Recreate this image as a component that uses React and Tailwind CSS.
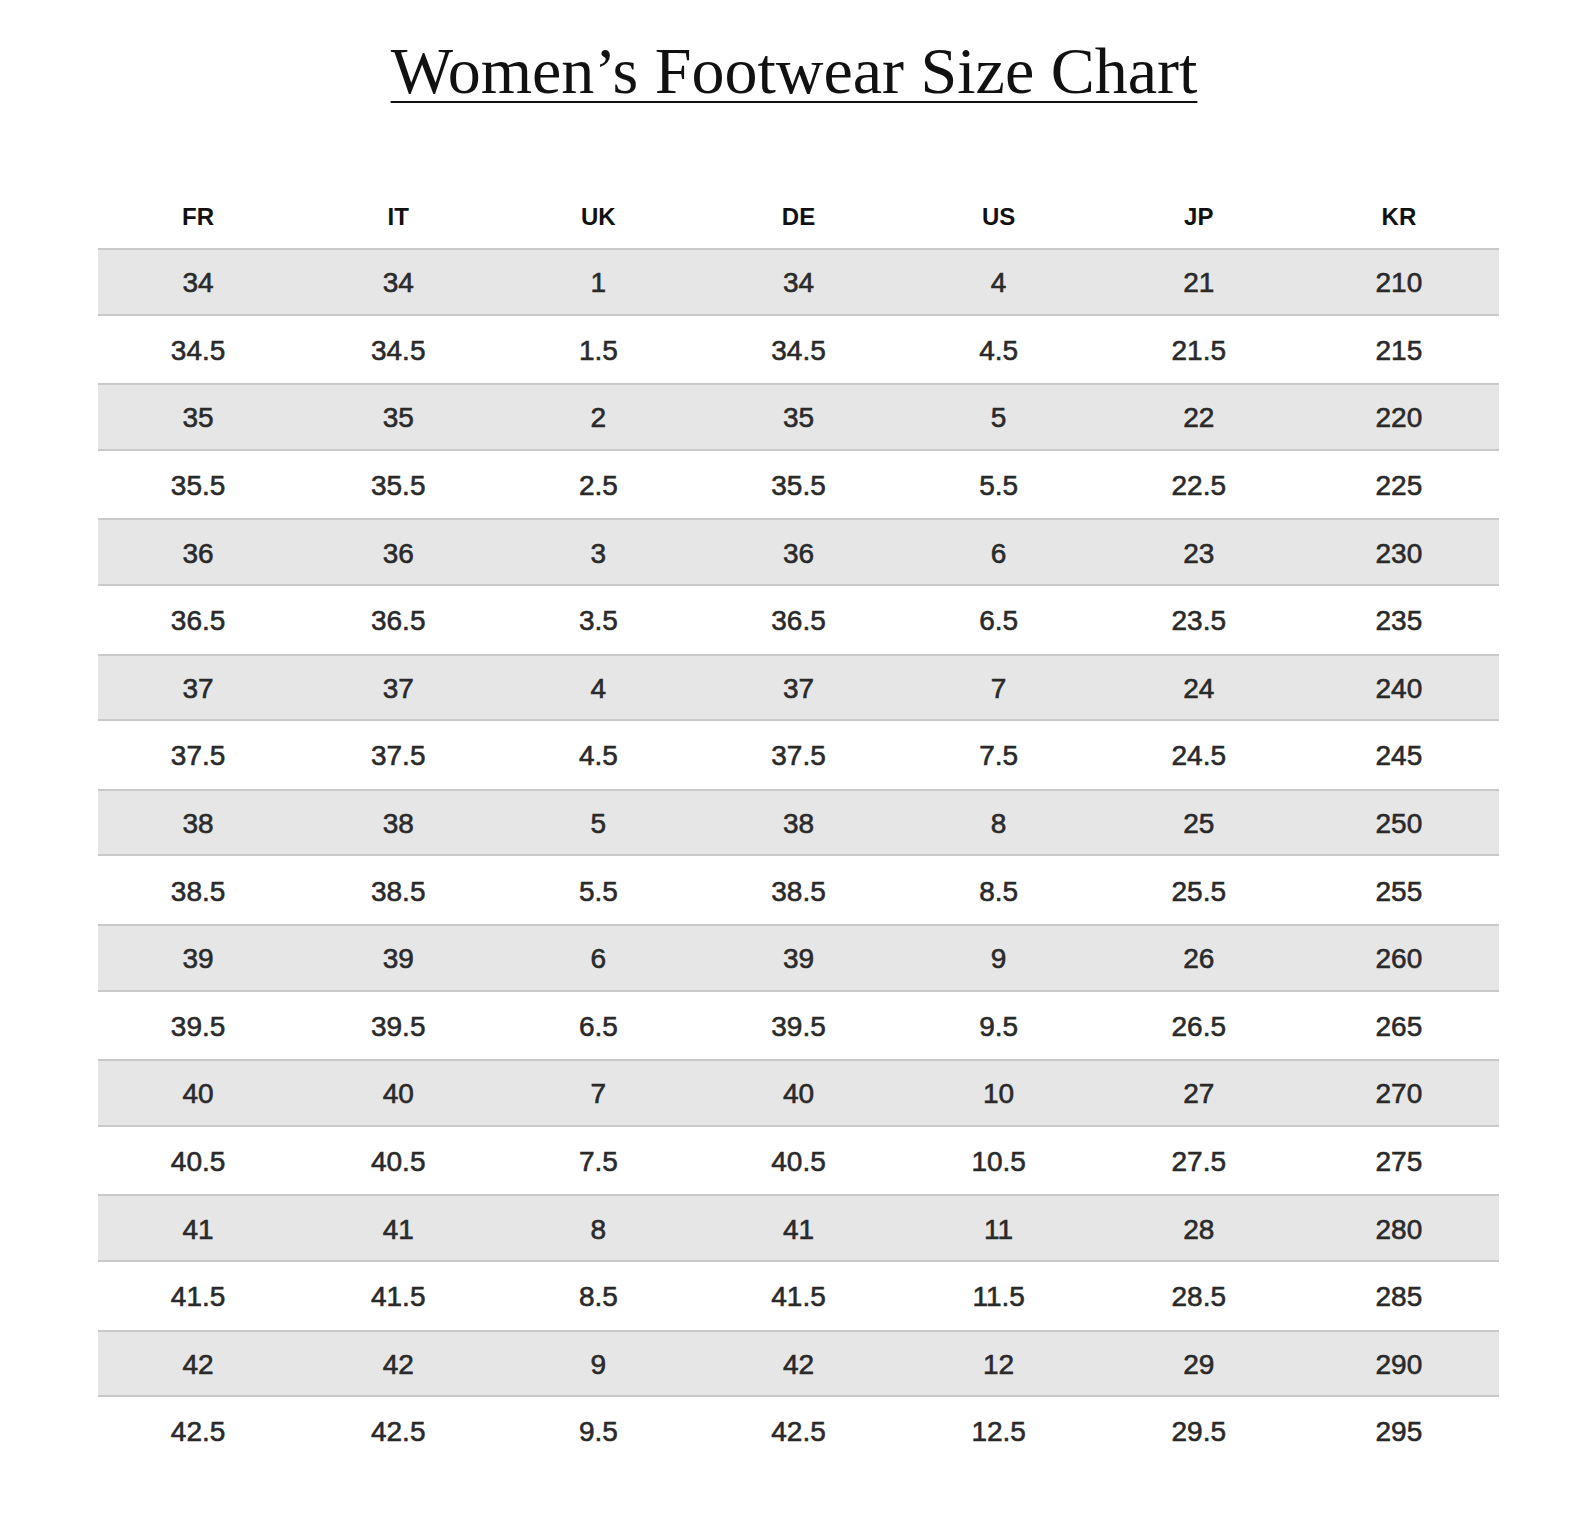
import React from 'react';

const headers = ['FR', 'IT', 'UK', 'DE', 'US', 'JP', 'KR'];

const rows = [
  ['34', '34', '1', '34', '4', '21', '210'],
  ['34.5', '34.5', '1.5', '34.5', '4.5', '21.5', '215'],
  ['35', '35', '2', '35', '5', '22', '220'],
  ['35.5', '35.5', '2.5', '35.5', '5.5', '22.5', '225'],
  ['36', '36', '3', '36', '6', '23', '230'],
  ['36.5', '36.5', '3.5', '36.5', '6.5', '23.5', '235'],
  ['37', '37', '4', '37', '7', '24', '240'],
  ['37.5', '37.5', '4.5', '37.5', '7.5', '24.5', '245'],
  ['38', '38', '5', '38', '8', '25', '250'],
  ['38.5', '38.5', '5.5', '38.5', '8.5', '25.5', '255'],
  ['39', '39', '6', '39', '9', '26', '260'],
  ['39.5', '39.5', '6.5', '39.5', '9.5', '26.5', '265'],
  ['40', '40', '7', '40', '10', '27', '270'],
  ['40.5', '40.5', '7.5', '40.5', '10.5', '27.5', '275'],
  ['41', '41', '8', '41', '11', '28', '280'],
  ['41.5', '41.5', '8.5', '41.5', '11.5', '28.5', '285'],
  ['42', '42', '9', '42', '12', '29', '290'],
  ['42.5', '42.5', '9.5', '42.5', '12.5', '29.5', '295'],
];

export default function App() {
  return (
    <div className="w-[1588px] min-h-[1525px] bg-white pt-[35px]">
      <h1 className="text-center font-['Liberation_Serif',serif] text-[66px] leading-[72px] text-[#111]">
        <span className="underline decoration-2 underline-offset-[8px]">Women’s Footwear Size Chart</span>
      </h1>

      <div className="ml-[98px] mt-[74px] w-[1401px] font-['Liberation_Sans',Arial,sans-serif]">
        <div className="grid grid-cols-7 h-[67px] items-center pt-[4px]">
          {headers.map((h) => (
            <div key={h} className="text-center text-[24px] font-bold text-[#111]">
              {h}
            </div>
          ))}
        </div>

        {rows.map((row, i) => (
          <div
            key={i}
            className={
              i % 2 === 0
                ? 'grid grid-cols-7 h-[67.6px] items-center pt-[3px] bg-[#e6e6e6] border-y-2 border-[#c9c9c9]'
                : 'grid grid-cols-7 h-[67.6px] items-center pt-[3px]'
            }
          >
            {row.map((cell, j) => (
              <div
                key={j}
                className="text-center text-[28px] text-[#2a2a2a] [-webkit-text-stroke:0.6px_#2a2a2a]"
              >
                {cell}
              </div>
            ))}
          </div>
        ))}
      </div>
    </div>
  );
}
